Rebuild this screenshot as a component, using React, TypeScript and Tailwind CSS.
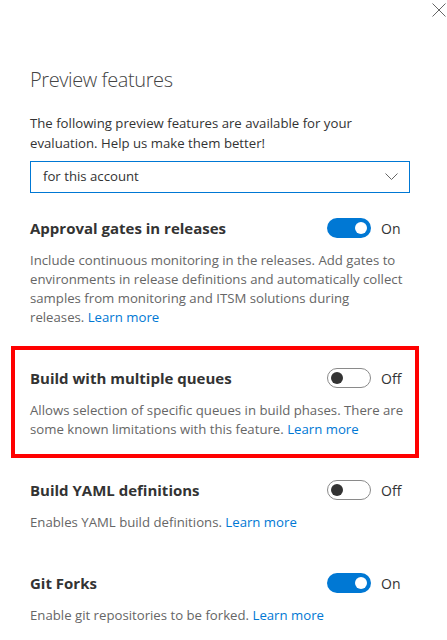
import { useState } from "react";

type Feature = {
  title: string;
  desc: string;
  on: boolean;
  marked?: boolean;
};

const features: Feature[] = [
  {
    title: "Approval gates in releases",
    desc: "Include continuous monitoring in the releases. Add gates to environments in release definitions and automatically collect samples from monitoring and ITSM solutions during releases.",
    on: true,
  },
  {
    title: "Build with multiple queues",
    desc: "Allows selection of specific queues in build phases. There are some known limitations with this feature.",
    on: false,
    marked: true,
  },
  {
    title: "Build YAML definitions",
    desc: "Enables YAML build definitions.",
    on: false,
  },
  {
    title: "Git Forks",
    desc: "Enable git repositories to be forked.",
    on: true,
  },
];

function Toggle({ on, onClick }: { on: boolean; onClick: () => void }) {
  return (
    <button onClick={onClick} className="flex items-center gap-[10px]">
      {on ? (
        <span className="flex h-[20px] w-[44px] items-center justify-end rounded-full bg-[#0078d4] pr-[4px]">
          <span className="h-[12px] w-[12px] rounded-full bg-white" />
        </span>
      ) : (
        <span className="flex h-[20px] w-[44px] items-center rounded-full border border-[#8a8a8a] bg-white pl-[3px]">
          <span className="h-[12px] w-[12px] rounded-full bg-[#333]" />
        </span>
      )}
      <span className="w-[24px] text-left text-[14px] text-[#333]">{on ? "On" : "Off"}</span>
    </button>
  );
}

export default function App() {
  const [state, setState] = useState(features.map((f) => f.on));

  return (
    <div className="h-[640px] w-[447px] overflow-hidden bg-white font-['Open_Sans',sans-serif] text-[#333]">
      <div className="flex justify-end pr-[1px] pt-[3px]">
        <svg width="14" height="14" viewBox="0 0 14 14" className="text-[#666]">
          <path d="M0.5 0.5 L13.5 13.5 M13.5 0.5 L0.5 13.5" stroke="currentColor" strokeWidth="1" fill="none" />
        </svg>
      </div>

      <div className="px-[30px]">
        <h1 className="mt-[49px] text-[20px] leading-[28px] font-light tracking-[-0.4px] text-[#444]">
          Preview features
        </h1>
        <p className="mt-[19px] text-[13.2px] leading-[20px] text-[#333]">
          The following preview features are available for your evaluation. Help us make them better!
        </p>
        <div className="mt-[8px] flex h-[32px] w-[380px] items-center justify-between border border-[#0078d4] pl-[12px] pr-[11px] text-[13.2px] text-[#333]">
          <span>for this account</span>
          <svg width="13" height="8" viewBox="0 0 13 8">
            <path d="M0.5 0.5 L6.5 6.5 L12.5 0.5" stroke="#666" strokeWidth="1" fill="none" />
          </svg>
        </div>
      </div>

      <div className="mt-[3px] px-[11px]">
        {features.map((f, i) => (
          <div
            key={f.title}
            className={`w-[408px] border-4 pl-[15px] pr-[5px] pt-[18px] pb-[15px] ${
              f.marked ? "border-[#ff0000]" : "border-transparent"
            }`}
          >
            <div className="mr-[5px] flex h-[20px] items-center justify-between">
              <span className="text-[15px] font-bold text-[#333]">{f.title}</span>
              <Toggle
                on={state[i]}
                onClick={() => setState((s) => s.map((v, j) => (j === i ? !v : v)))}
              />
            </div>
            <p className="mt-[13px] w-[374px] text-[13.2px] leading-[19px] text-[#666]">
              {f.desc} <a href="#" className="text-[#0078d4]">Learn more</a>
            </p>
          </div>
        ))}
      </div>
    </div>
  );
}
